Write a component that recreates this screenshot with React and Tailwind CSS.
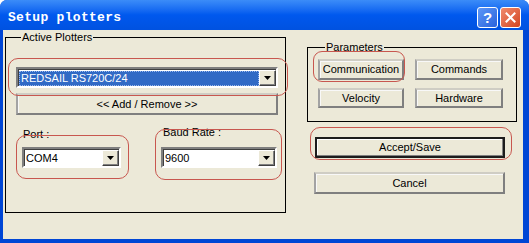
import React from 'react';

const font = { fontFamily: '"Liberation Sans", Arial, sans-serif' };

const DropArrow = () => (
  <div className="flex h-full w-[17px] items-center justify-center border border-t-white border-l-white border-r-[#404040] border-b-[#404040] bg-[#ece9d8] shadow-[inset_-1px_-1px_0_#808080]">
    <svg width="7" height="4" viewBox="0 0 7 4">
      <path d="M0 0h7L3.5 4z" fill="#000" />
    </svg>
  </div>
);

const Combo = ({ value, selected, className }) => (
  <div
    className={`flex items-stretch border-2 border-t-[#7f7f7f] border-l-[#7f7f7f] border-r-white border-b-white bg-white shadow-[inset_1px_1px_0_#404040] ${className}`}
  >
    <div className="flex flex-1 items-center pl-[1px] pt-[1px]">
      {selected ? (
        <div className="flex h-[15px] flex-1 items-center border border-dotted border-[#9ab8ee] bg-[#316ac5] pl-[1px] text-white">
          {value}
        </div>
      ) : (
        <span className="pl-[1px] text-black">{value}</span>
      )}
    </div>
    <div className="pt-[1px] pb-0">
      <DropArrow />
    </div>
  </div>
);

const Button = ({ children, className, isDefault }) => (
  <div
    className={`flex items-center justify-center text-black ${
      isDefault
        ? 'border-2 border-[#1c1c1c] bg-[#ece9d8] shadow-[inset_-1px_-1px_0_#808080,inset_1px_1px_0_#fff]'
        : 'border-2 border-t-[#cfcdc4] border-l-[#a3a3a3] border-r-[#7f7f7f] border-b-[#7f7f7f] bg-[#ece9d8] shadow-[inset_1px_1px_0_#f8f8f8]'
    } ${className}`}
  >
    {children}
  </div>
);

export default function App() {
  return (
    <div
      className="flex h-[243px] w-[529px] flex-col overflow-hidden rounded-t-[7px] bg-[#0046d5] text-[11px] leading-[13px]"
      style={font}
    >
      {/* Title bar */}
      <div className="flex h-[30px] shrink-0 items-center justify-between bg-gradient-to-b from-[#3b8cf8] via-[#0058ee] to-[#0052e0] pl-[8px] pr-[8px] pt-[4px]">
        <span
          className="text-[13px] font-bold tracking-[0.3px] text-white"
          style={{ fontFamily: '"Liberation Mono", "DejaVu Sans Mono", monospace' }}
        >
          Setup plotters
        </span>
        <div className="flex gap-[2px]">
          <div className="flex h-[21px] w-[21px] items-center justify-center rounded-[3px] border border-white bg-gradient-to-br from-[#5d97f7] to-[#2a62dc] text-[15px] font-bold text-white">
            ?
          </div>
          <div className="flex h-[21px] w-[21px] items-center justify-center rounded-[3px] border border-white bg-gradient-to-br from-[#f08a6c] to-[#d2431e]">
            <svg width="11" height="11" viewBox="0 0 11 11">
              <path d="M1.5 1.5l8 8M9.5 1.5l-8 8" stroke="#fff" strokeWidth="2" strokeLinecap="square" />
            </svg>
          </div>
        </div>
      </div>

      {/* Body */}
      <div className="relative ml-[3px] mr-[6px] mb-[4px] flex flex-1 bg-[#ece9d8] text-black">
        {/* Active Plotters */}
        <fieldset className="ml-[2px] mt-[1px] h-[182px] w-[281px] border border-black pl-[10px] pr-[6px]">
          <legend className="ml-[5px] px-[1px]">Active Plotters</legend>
          <Combo value="REDSAIL RS720C/24" selected className="mt-[23px] h-[21px] w-[262px]" />
          <Button className="mt-[5px] h-[22px] w-[262px]">&lt;&lt; Add / Remove &gt;&gt;</Button>
          <div className="mt-[13px] flex gap-[40px] pl-[6px]">
            <div className="flex flex-col">
              <span className="pl-[1px]">Port :</span>
              <Combo value="COM4" className="mt-[6px] h-[21px] w-[99px]" />
            </div>
            <div className="flex flex-col">
              <span className="-mt-[2px] pl-[2px]">Baud Rate :</span>
              <Combo value="9600" className="mt-[8px] h-[21px] w-[116px]" />
            </div>
          </div>
        </fieldset>

        {/* Right column */}
        <div className="ml-[21px] flex flex-col">
          <fieldset className="mt-[11px] h-[81px] w-[210px] border border-black pl-[10px]">
            <legend className="ml-[7px] px-[1px]">Parameters</legend>
            <div className="mt-[5px] flex gap-[11px]">
              <Button className="h-[21px] w-[86px]">Communication</Button>
              <Button className="h-[21px] w-[88px]">Commands</Button>
            </div>
            <div className="mt-[8px] flex gap-[11px]">
              <Button className="h-[20px] w-[86px]">Velocity</Button>
              <Button className="h-[20px] w-[88px]">Hardware</Button>
            </div>
          </fieldset>
          <Button isDefault className="ml-[8px] mt-[15px] h-[21px] w-[190px]">Accept/Save</Button>
          <Button className="ml-[7px] mt-[14px] h-[22px] w-[191px]">Cancel</Button>
        </div>

        {/* Red annotation outlines */}
        <div className="pointer-events-none absolute left-[5px] top-[28px] h-[38px] w-[280px] rounded-[10px] border border-[#c8574f]" />
        <div className="pointer-events-none absolute left-[13px] top-[105px] h-[44px] w-[113px] rounded-[10px] border border-[#c8574f]" />
        <div className="pointer-events-none absolute left-[152px] top-[99px] h-[51px] w-[127px] rounded-[10px] border border-[#c8574f]" />
        <div className="pointer-events-none absolute left-[310px] top-[21px] h-[31px] w-[92px] rounded-[9px] border border-[#c8574f]" />
        <div className="pointer-events-none absolute left-[307px] top-[97px] h-[33px] w-[202px] rounded-[10px] border border-[#c8574f]" />
      </div>
    </div>
  );
}
